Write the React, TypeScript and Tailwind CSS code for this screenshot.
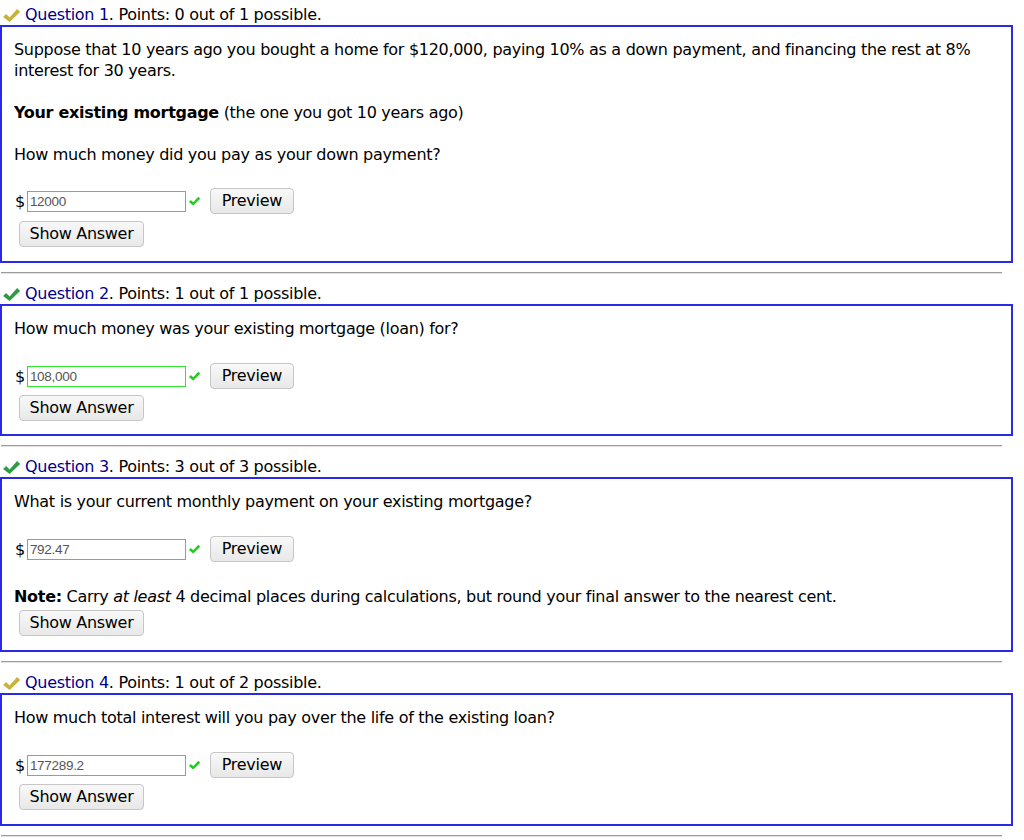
import React from "react"

const font = { fontFamily: '"DejaVu Sans", Verdana, sans-serif' }

function HeadCheck({ color }: { color: string }) {
  return (
    <svg width="19" height="15" viewBox="0 0 20 16" className="mr-[4px] shrink-0">
      <path d="M1 9.5 L4.2 6.3 L8 10 L16 1 L19.2 4.2 L8 15 Z" fill={color} />
    </svg>
  )
}

function SmallCheck() {
  return (
    <svg width="13" height="10" viewBox="0 0 20 16" className="mx-[2px] shrink-0">
      <path d="M1 9.5 L4.2 6.3 L8 10 L16 1 L19.2 4.2 L8 15 Z" fill="#1fcf1f" />
    </svg>
  )
}

function Btn({ children, w }: { children: React.ReactNode; w: string }) {
  return (
    <button
      className={`${w} h-[26px] rounded-[4px] border border-[#c6c6c6] bg-gradient-to-b from-[#f8f8f8] to-[#e8e8e8] text-[16px] text-black leading-none tracking-[-0.3px]`}
      style={font}
    >
      {children}
    </button>
  )
}

function AnswerRow({ value }: { value: string }) {
  return (
    <div className="flex items-center h-[26px]">
      <span className="text-[16px] ml-[1px] mr-[2px]">$</span>
      <div
        className="w-[159px] h-[21px] border border-[#2ee52e] flex items-center pl-[2px] text-[13.5px] text-[#555] bg-white"
        style={{ fontFamily: '"Liberation Sans", Arial, sans-serif' }}
      >
        {value}
      </div>
      <SmallCheck />
      <span className="w-[7px]" />
      <Btn w="w-[84px]">Preview</Btn>
    </div>
  )
}

function Question({
  n,
  got,
  of,
  check,
  gap,
  pb,
  children,
}: {
  n: number
  got: number
  of: number
  check: string
  gap: string
  pb: string
  children: React.ReactNode
}) {
  return (
    <div>
      <div className="flex items-center h-[20px] pl-[2px] text-[16px] leading-[20px] tracking-[-0.3px]">
        <HeadCheck color={check} />
        <span className="text-[#00008b]">Question {n}</span>
        <span>. Points: {got} out of {of} possible.</span>
      </div>
      <div className={`border-2 border-[#2a2ae6] pl-[12px] pr-[12px] pt-[12px] ${pb} text-[16px] leading-[21px] tracking-[-0.3px]`}>
        {children}
        <div className={`${gap} pl-[5px]`}>
          <Btn w="w-[125px]">Show Answer</Btn>
        </div>
      </div>
    </div>
  )
}

function Rule() {
  return <div className="mt-[9px] mb-[10px] h-[2px] border-t border-[#9c9c9c] border-b border-b-[#e2e2e2] mr-[11px] ml-[1px]" />
}

export default function App() {
  return (
    <div className="w-[1024px] h-[840px] bg-white text-black overflow-hidden pt-[5px]" style={font}>
      <div className="w-[1013px]">
        <Question n={1} got={0} of={1} check="#c7b23a" gap="mt-[7px]" pb="pb-[14px]">
          <p>
            Suppose that 10 years ago you bought a home for $120,000, paying 10% as a down payment, and financing the rest
            at 8% interest for 30 years.
          </p>
          <p className="mt-[21px]">
            <b>Your existing mortgage</b> (the one you got 10 years ago)
          </p>
          <p className="mt-[21px]">How much money did you pay as your down payment?</p>
          <div className="mt-[23px]">
            <AnswerRow value="12000" />
          </div>
        </Question>
        <Rule />
        <Question n={2} got={1} of={1} check="#2f9a45" gap="mt-[6px]" pb="pb-[13px]">
          <p>How much money was your existing mortgage (loan) for?</p>
          <div className="mt-[24px]">
            <AnswerRow value="108,000" />
          </div>
        </Question>
        <Rule />
        <Question n={3} got={3} of={3} check="#2f9a45" gap="mt-[3px]" pb="pb-[14px]">
          <p>What is your current monthly payment on your existing mortgage?</p>
          <div className="mt-[24px]">
            <AnswerRow value="792.47" />
          </div>
          <p className="mt-[24px]">
            <b>Note:</b> Carry <i>at least</i> 4 decimal places during calculations, but round your final answer to the
            nearest cent.
          </p>
        </Question>
        <Rule />
        <Question n={4} got={1} of={2} check="#c7b23a" gap="mt-[6px]" pb="pb-[14px]">
          <p>How much total interest will you pay over the life of the existing loan?</p>
          <div className="mt-[24px]">
            <AnswerRow value="177289.2" />
          </div>
        </Question>
        <Rule />
      </div>
    </div>
  )
}
